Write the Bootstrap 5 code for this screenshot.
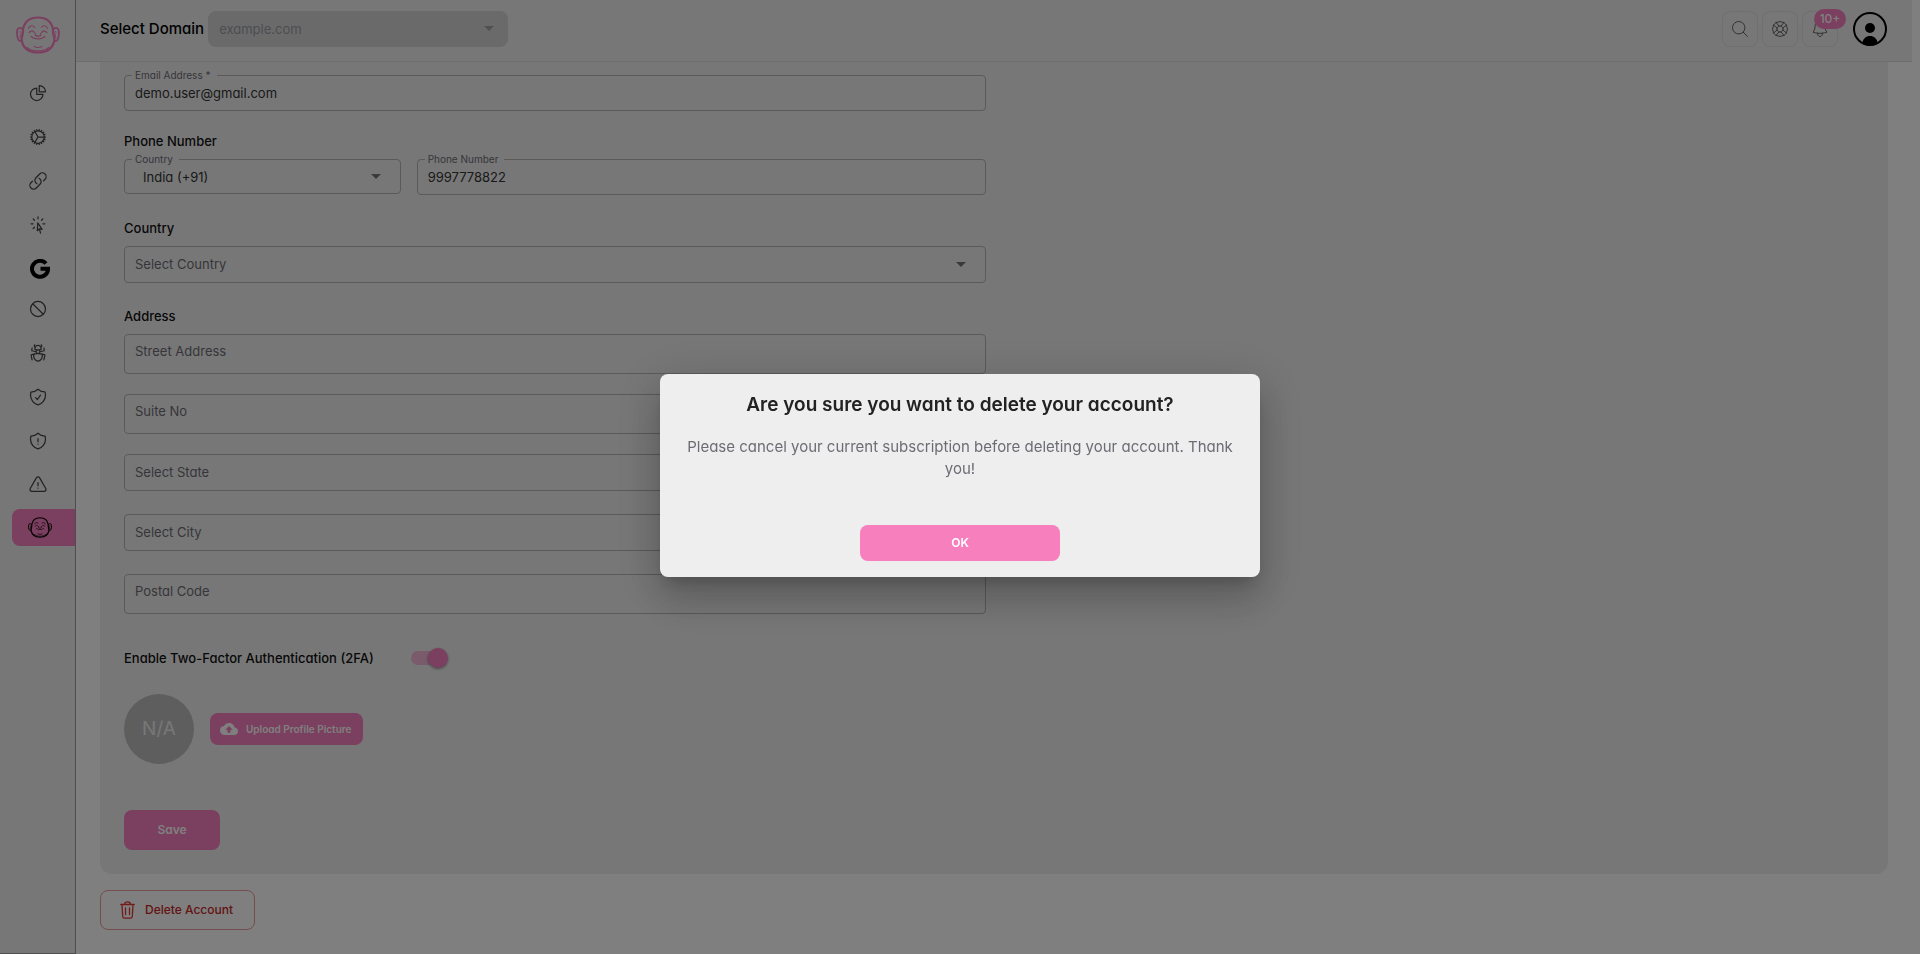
<!DOCTYPE html>
<html lang="en">
<head>
<meta charset="utf-8">
<meta name="viewport" content="width=device-width, initial-scale=1">
<title>Account settings</title>
<link href="https://cdn.jsdelivr.net/npm/bootstrap@5.3.0/dist/css/bootstrap.min.css" rel="stylesheet">
<style>
:root { --pink: #f77fbe; --panel: #efefef; --ink: #222; --line: #b4b4b4; --muted: #6c6c74; }
body { font-family: Inter, "Liberation Sans", sans-serif; font-feature-settings: "cv11"; font-size: 13px; line-height: 20px; color: var(--ink); background: #fff; padding-right: 8px; }
input, select, button { font-feature-settings: inherit; }
svg { display: block; }
.line-icon { fill: none; stroke: currentColor; stroke-width: 1.5; stroke-linecap: round; stroke-linejoin: round; }

.side-bar { width: 76px; background: var(--panel); border-right: 1px solid #9c9c9c; border-bottom: 1px solid #9c9c9c; height: 100vh; position: sticky; top: 0; }
.side-logo { color: var(--pink); margin-bottom: 17px; }
.side-link { height: 44px; color: #444; }
.side-link.short-link { height: 40px; color: #000; padding: 4px 0 0 4px; }
.side-link.current-link { height: 37px; margin: 2px 0 0 12px; padding-right: 8px; background: var(--pink); color: #000; border-radius: 8px 0 0 8px; }

.top-bar { height: 62px; background: var(--panel); border-bottom: 1px solid #dcdcdc; padding: 0 25px 4px 24px; }
.domain-label { font-size: 15px; font-weight: 500; color: #000; }
.domain-select { width: 300px; height: 36px; border: 0; border-radius: 8px; font-size: 13px; padding: 0 11px; color: #9a9ca4; opacity: 1; background-color: #d4d4d4; }
.tool-btn { width: 36px; height: 36px; border: 1px solid #dedede; border-radius: 8px; color: #666; background: transparent; padding: 0; }
.tool-btn .line-icon { stroke-width: 1.2; }
.count-badge { top: -3px; left: 11px; min-width: 32px; height: 20px; line-height: 20px; border-radius: 10px; background: var(--pink); color: #fff; font-size: 12px; font-weight: 500; }
.user-btn { margin-left: 11px; }

.settings-panel { margin: 0 24px; padding: 13px 24px 24px; background: var(--panel); border-radius: 0 0 12px 12px; }
.form-col { padding-right: 8px; }
.sub-title { font-size: 13px; line-height: 20px; font-weight: 500; color: #111; margin: 23px 0 8px; }
.sub-title.first-title { margin-top: 20px; }
.field { position: relative; }
.field-box { display: block; width: 100%; height: 36px; border: 1px solid var(--line); border-radius: 4px; background-color: transparent; padding: 0 10px; font-size: 13px; color: #333; }
.field-box::placeholder { color: var(--muted); opacity: 1; }
select.field-box, .domain-select { appearance: none; background-repeat: no-repeat; background-position: right 19px center; background-image: url("data:image/svg+xml,%3Csvg xmlns='http://www.w3.org/2000/svg' width='10' height='5'%3E%3Cpath d='M0 0h10L5 5z' fill='%23757575'/%3E%3C/svg%3E"); }
.domain-select { background-position: right 14px center; background-image: url("data:image/svg+xml,%3Csvg xmlns='http://www.w3.org/2000/svg' width='10' height='5'%3E%3Cpath d='M0 0h10L5 5z' fill='%23a0a0a0'/%3E%3C/svg%3E"); }
select.field-box { height: 37px; padding-bottom: 2px; }
select.unset { color: var(--muted); }
.field-box.dial-box { height: 35px; padding-left: 18px; padding-bottom: 0; }
.field-box.tall-box { height: 40px; padding-bottom: 6px; }
.notch { position: absolute; left: 8px; top: -7px; padding: 0 6px 0 3px; background: var(--panel); font-size: 10px; line-height: 14px; color: var(--muted); }
.address-grid { display: grid; grid-auto-rows: 40px; gap: 20px; }

.toggle { appearance: none; position: relative; width: 37px; height: 20px; margin: 0; }
.toggle::before { content: ""; position: absolute; left: 0; top: 3px; width: 34px; height: 14px; border-radius: 7px; background: var(--pink); opacity: .5; }
.toggle::after { content: ""; position: absolute; right: 0; top: 0; width: 20px; height: 20px; border-radius: 50%; background: var(--pink); box-shadow: 0 1px 3px rgba(0,0,0,.4); }
.twofa-row { margin-top: 34px; gap: 37px; }
.twofa-row label { font-weight: 500; color: #111; }
.picture-row { margin-top: 26px; gap: 16px; }
.initials { width: 70px; height: 70px; background: #bdbdbd; color: #efefef; font-size: 19px; }
.pink-btn { border: 0; border-radius: 8px; background: var(--pink); color: #fff; font-weight: 600; }
.upload-btn { height: 32px; padding: 0 12px 0 10px; gap: 8px; font-size: 10px; }
.save-btn { width: 96px; height: 40px; margin-top: 46px; font-size: 12px; }
.delete-btn { margin: 16px 24px 24px; height: 40px; border: 1px solid #e99a9a; border-radius: 8px; background: transparent; color: #c62828; font-weight: 500; padding: 0 21px 0 19px; gap: 10px; font-size: 12px; }

.modal-backdrop.show { opacity: .5; }
.modal-dialog.confirm-dialog { max-width: 600px; padding-bottom: 4px; }
.confirm-box { border: 0; border-radius: 8px; background: #eee; padding: 17px 24px 16px; text-align: center; box-shadow: 0 11px 15px -7px rgba(0,0,0,.2), 0 24px 38px 3px rgba(0,0,0,.14), 0 9px 46px 8px rgba(0,0,0,.12); }
.confirm-title { font-size: 19px; line-height: 27px; font-weight: 600; color: var(--ink); margin: 0; }
.confirm-text { font-size: 15px; line-height: 22px; color: #6c6c74; margin: 18px 0 45px; }
.ok-btn { width: 200px; height: 36px; font-size: 12px; margin: 0 auto; }
</style>
</head>
<body>
<svg width="0" height="0" class="position-absolute" aria-hidden="true">
  <symbol id="buddha" viewBox="0 0 44 40" preserveAspectRatio="none">
    <g fill="none" stroke="currentColor" stroke-linecap="round" stroke-linejoin="round">
      <path stroke-width="2.200" d="M7 14C8.500 6 14 1.500 22 1.500S35.500 6 37 14M5.500 25C7 34 13 38.500 22 38.500S37 34 38.500 25M7 14c.5 3-1 8-1.500 11M37 14c-.5 3 1 8 1.500 11"/>
      <path stroke-width="1.800" d="M6.500 14C4.500 11 1 12.500 1 17c0 5 1 9.500 4 9.500M37.500 14c2-3 5.500-1.500 5.500 3 0 5-1 9.500-4 9.500"/>
      <path stroke-width="1" d="M3.500 17c1-2 2 0 1.500 2l-1 4M40.500 17c-1-2-2 0-1.500 2l1 4"/>
      <path stroke-width="1.200" d="M12.500 13c1-3.500 5-3.500 6-1M31.500 13c-1-3.500-5-3.500-6-1M13 17.500c2-2.500 4-2.500 5.500 0M31 17.500c-2-2.500-4-2.500-5.500 0M19.500 18.500c-1 3 1 2 2.500 3 1.500-1 3.500 0 2.500-3M15 21.500c3 3.500 11 3.500 14 0M18 32c2 1.600 6 1.600 8 0M11 33c5 5 17 5 22 0"/>
    </g>
  </symbol>
</svg>
<div class="d-flex">
  <aside class="side-bar flex-shrink-0 pt-3">
    <a href="#" class="side-logo d-flex justify-content-center" aria-label="Home"><svg width="44" height="38"><use href="#buddha"/></svg></a>
    <nav class="d-flex flex-column" aria-label="Main">
      <a href="#" class="side-link d-flex align-items-center justify-content-center" aria-label="Statistics"><svg class="line-icon" width="20" height="20" viewBox="0 0 24 24"><path d="M10.500 6a7.500 7.500 0 1 0 7.500 7.500h-7.500V6Z"/><path d="M13.500 10.500H21A7.500 7.500 0 0 0 13.500 3v7.500Z"/></svg></a>
      <a href="#" class="side-link d-flex align-items-center justify-content-center" aria-label="Settings"><svg class="line-icon" width="20" height="20" viewBox="0 0 24 24"><path d="M4.500 12a7.500 7.500 0 0 0 15 0m-15 0a7.500 7.500 0 1 1 15 0m-15 0H3m16.500 0H21m-1.500 0H12m-8.457 3.077 1.410-.513m14.095-5.130 1.410-.513M5.106 17.785l1.150-.964m11.490-9.642 1.149-.964M7.501 19.795l.75-1.300m7.500-12.990.75-1.300m-6.063 16.658.26-1.477m2.605-14.772.26-1.477m0 17.726-.26-1.477M10.698 4.614l-.26-1.477M16.500 19.794l-.75-1.299M7.500 4.205 12 12m6.894 5.785-1.149-.964M6.256 7.178l-1.150-.964m15.352 8.864-1.410-.513M4.954 9.435l-1.410-.514M12.002 12l-3.750 6.495"/></svg></a>
      <a href="#" class="side-link d-flex align-items-center justify-content-center" aria-label="Links"><svg class="line-icon" width="20" height="20" viewBox="0 0 24 24"><path d="M13.190 8.688a4.500 4.500 0 0 1 1.242 7.244l-4.500 4.500a4.500 4.500 0 0 1-6.364-6.364l1.757-1.757m13.350-.622 1.757-1.757a4.500 4.500 0 0 0-6.364-6.364l-4.500 4.500a4.500 4.500 0 0 0 1.242 7.244"/></svg></a>
      <a href="#" class="side-link d-flex align-items-center justify-content-center" aria-label="Clicks"><svg class="line-icon" width="20" height="20" viewBox="0 0 24 24"><path d="M15.042 21.672 13.684 16.600m0 0-2.510 2.225.569-9.470 5.227 7.917-3.286-.672ZM12 2.250V4.500m5.834.166-1.591 1.591M20.250 10.500H18M7.757 14.743l-1.590 1.590M6 10.500H3.750m4.007-4.243-1.590-1.590"/></svg></a>
      <a href="#" class="side-link short-link d-flex align-items-center justify-content-center" aria-label="Google Ads"><svg width="20" height="20" viewBox="0 0 20 20"><path fill="none" stroke="currentColor" stroke-width="4" d="M16 4.500A8 8 0 1 0 18 10.500V9.800H10.500"/></svg></a>
      <a href="#" class="side-link d-flex align-items-center justify-content-center" aria-label="Blocked"><svg class="line-icon" width="20" height="20" viewBox="0 0 24 24"><path d="M18.364 18.364A9 9 0 0 0 5.636 5.636m12.728 12.728A9 9 0 0 1 5.636 5.636m12.728 12.728L5.636 5.636"/></svg></a>
      <a href="#" class="side-link d-flex align-items-center justify-content-center" aria-label="Bots"><svg class="line-icon" width="20" height="20" viewBox="0 0 24 24"><path d="M12 12.750c1.148 0 2.278.08 3.383.237 1.037.146 1.866.966 1.866 2.013 0 3.728-2.350 6.750-5.250 6.750S6.750 18.728 6.750 15c0-1.046.83-1.867 1.866-2.013A24.204 24.204 0 0 1 12 12.750Zm0 0c2.883 0 5.647.508 8.207 1.440a23.910 23.910 0 0 1-1.152 6.060M12 12.750c-2.883 0-5.647.508-8.208 1.440.125 2.104.52 4.136 1.153 6.060M12 12.750a2.250 2.250 0 0 0 2.248-2.354M12 12.750a2.250 2.250 0 0 1-2.248-2.354M12 8.250c.995 0 1.971-.08 2.922-.236.403-.066.74-.358.795-.762a3.778 3.778 0 0 0-.399-2.250M12 8.250c-.995 0-1.970-.08-2.922-.236-.402-.066-.74-.358-.795-.762a3.734 3.734 0 0 1 .4-2.253M12 8.250a2.250 2.250 0 0 0-2.248 2.146M12 8.250a2.250 2.250 0 0 1 2.248 2.146M8.683 5a6.032 6.032 0 0 1-1.155-1.002c.07-.63.27-1.222.574-1.747m.581 2.749A3.750 3.750 0 0 1 15.318 5m0 0c.427-.283.815-.62 1.155-.999a4.471 4.471 0 0 0-.575-1.752M4.921 6a24.048 24.048 0 0 0-.392 3.314c1.668.546 3.416.914 5.223 1.082M19.080 6c.205 1.080.337 2.187.392 3.314a23.882 23.882 0 0 1-5.223 1.082"/></svg></a>
      <a href="#" class="side-link d-flex align-items-center justify-content-center" aria-label="Protection"><svg class="line-icon" width="20" height="20" viewBox="0 0 24 24"><path d="M9 12.750 11.250 15 15 9.750m-3-7.036A11.959 11.959 0 0 1 3.598 6 11.990 11.990 0 0 0 3 9.749c0 5.592 3.824 10.290 9 11.623 5.176-1.332 9-6.030 9-11.622 0-1.310-.21-2.571-.598-3.751h-.152c-3.196 0-6.100-1.248-8.250-3.285Z"/></svg></a>
      <a href="#" class="side-link d-flex align-items-center justify-content-center" aria-label="Threats"><svg class="line-icon" width="20" height="20" viewBox="0 0 24 24"><path d="M12 9v3.750m0-10.036A11.959 11.959 0 0 1 3.598 6 11.990 11.990 0 0 0 3 9.750c0 5.592 3.824 10.290 9 11.622 5.176-1.332 9-6.030 9-11.622 0-1.310-.21-2.570-.598-3.750h-.152c-3.196 0-6.100-1.249-8.250-3.286Zm0 13.036h.008v.008H12v-.008Z"/></svg></a>
      <a href="#" class="side-link d-flex align-items-center justify-content-center" aria-label="Alerts"><svg class="line-icon" width="20" height="20" viewBox="0 0 24 24"><path d="M12 9v3.750m-9.303 3.376c-.866 1.500.217 3.374 1.948 3.374h14.710c1.730 0 2.813-1.874 1.948-3.374L13.949 3.378c-.866-1.500-3.032-1.500-3.898 0L2.697 16.126ZM12 15.750h.007v.008H12v-.008Z"/></svg></a>
      <a href="#" class="side-link current-link d-flex align-items-center justify-content-center" aria-label="Account" aria-current="page"><svg width="24" height="21"><use href="#buddha"/></svg></a>
    </nav>
  </aside>

  <div class="flex-grow-1">
    <header class="top-bar d-flex align-items-center">
      <label for="domain" class="domain-label me-1">Select Domain</label>
      <select id="domain" class="domain-select" disabled><option>example.com</option></select>
      <div class="d-flex align-items-center gap-1 ms-auto">
        <button type="button" class="tool-btn d-flex align-items-center justify-content-center" aria-label="Search"><svg class="line-icon" width="20" height="20" viewBox="0 0 24 24"><path d="m21 21-5.197-5.197m0 0A7.500 7.500 0 1 0 5.196 5.196a7.500 7.500 0 0 0 10.607 10.607Z"/></svg></button>
        <button type="button" class="tool-btn d-flex align-items-center justify-content-center" aria-label="Help"><svg class="line-icon" width="20" height="20" viewBox="0 0 24 24"><path d="M16.712 4.330a9.027 9.027 0 0 1 1.652 1.306c.51.51.944 1.064 1.306 1.652M16.712 4.330l-3.448 4.138m3.448-4.138a9.014 9.014 0 0 0-9.424 0M19.670 7.288l-4.138 3.448m4.138-3.448a9.014 9.014 0 0 1 0 9.424m-4.138-5.976a3.736 3.736 0 0 0-.88-1.388 3.737 3.737 0 0 0-1.388-.88m2.268 2.268a3.765 3.765 0 0 1 0 2.528m-2.268-4.796a3.765 3.765 0 0 0-2.528 0m4.796 4.796c-.181.506-.475.982-.88 1.388a3.736 3.736 0 0 1-1.388.88m2.268-2.268 4.138 3.448m0 0a9.027 9.027 0 0 1-1.306 1.652c-.51.51-1.064.944-1.652 1.306m0 0-3.448-4.138m3.448 4.138a9.014 9.014 0 0 1-9.424 0m5.976-4.138a3.765 3.765 0 0 1-2.528 0m0 0a3.736 3.736 0 0 1-1.388-.88 3.737 3.737 0 0 1-.88-1.388m2.268 2.268L7.288 19.670m0 0a9.024 9.024 0 0 1-1.652-1.306 9.027 9.027 0 0 1-1.306-1.652m0 0 4.138-3.448M4.330 16.712a9.014 9.014 0 0 1 0-9.424m4.138 5.976a3.765 3.765 0 0 1 0-2.528m0 0c.181-.506.475-.982.88-1.388a3.736 3.736 0 0 1 1.388-.88m-2.268 2.268L4.330 7.288m6.406 1.180L7.288 4.330m0 0a9.024 9.024 0 0 0-1.652 1.306A9.025 9.025 0 0 0 4.330 7.288"/></svg></button>
        <button type="button" class="tool-btn position-relative d-flex align-items-center justify-content-center" aria-label="Notifications"><svg class="line-icon" width="20" height="20" viewBox="0 0 24 24"><path d="M14.857 17.082a23.848 23.848 0 0 0 5.454-1.310A8.967 8.967 0 0 1 18 9.750V9A6 6 0 0 0 6 9v.75a8.967 8.967 0 0 1-2.312 6.022c1.733.64 3.560 1.085 5.455 1.310m5.714 0a24.255 24.255 0 0 1-5.714 0m5.714 0a3 3 0 1 1-5.714 0"/></svg><span class="count-badge position-absolute">10+</span></button>
        <button type="button" class="user-btn btn p-0 border-0 text-black" aria-label="Profile"><svg width="34" height="34" viewBox="0 0 34 34"><circle cx="17" cy="17" r="16" fill="none" stroke="currentColor" stroke-width="2"/><circle cx="17" cy="16" r="5" fill="currentColor"/><path fill="currentColor" d="M9.500 31.500C9.500 21.500 24.500 21.500 24.500 31.500Q17 36 9.500 31.500z"/></svg></button>
      </div>
    </header>

    <main>
      <section class="settings-panel">
        <form>
          <div class="row gx-0"><div class="col-6 form-col">
            <div class="field"><input id="email" type="email" class="field-box" value="demo.user@gmail.com"><label for="email" class="notch">Email Address *</label></div>
            <h2 class="sub-title first-title">Phone Number</h2>
            <div class="row gx-3">
              <div class="col-4"><div class="field"><select id="dial" class="field-box dial-box"><option>India (+91)</option></select><label for="dial" class="notch">Country</label></div></div>
              <div class="col-8"><div class="field"><input id="phone" type="tel" class="field-box" value="9997778822"><label for="phone" class="notch">Phone Number</label></div></div>
            </div>
            <h2 class="sub-title">Country</h2>
            <select class="field-box unset" aria-label="Country"><option>Select Country</option></select>
            <h2 class="sub-title">Address</h2>
            <div class="address-grid">
              <input type="text" class="field-box tall-box" placeholder="Street Address" aria-label="Street Address">
              <input type="text" class="field-box tall-box" placeholder="Suite No" aria-label="Suite No">
              <select class="field-box unset" aria-label="State"><option>Select State</option></select>
              <select class="field-box unset" aria-label="City"><option>Select City</option></select>
              <input type="text" class="field-box tall-box" placeholder="Postal Code" aria-label="Postal Code">
            </div>
          </div></div>
          <div class="twofa-row d-flex align-items-center">
            <label for="twofa">Enable Two-Factor Authentication (2FA)</label>
            <input id="twofa" type="checkbox" role="switch" class="toggle" checked>
          </div>
          <div class="picture-row d-flex align-items-center">
            <span class="initials rounded-circle d-flex align-items-center justify-content-center">N/A</span>
            <button type="button" class="pink-btn upload-btn d-flex align-items-center"><svg width="18" height="18" viewBox="0 0 24 24"><path fill="currentColor" d="M19.350 10.040A7.490 7.490 0 0 0 12 4C9.110 4 6.600 5.640 5.350 8.040A5.994 5.994 0 0 0 0 14c0 3.310 2.690 6 6 6h13c2.760 0 5-2.240 5-5 0-2.640-2.050-4.780-4.650-4.960zM14 13v4h-4v-4H7l5-5 5 5h-3z"/></svg>Upload Profile Picture</button>
          </div>
          <button type="button" class="pink-btn save-btn d-block">Save</button>
        </form>
      </section>
      <button type="button" class="delete-btn d-flex align-items-center"><svg width="15" height="18" viewBox="0 0 15 18" fill="none" stroke="#e53935" stroke-width="1.300" stroke-linecap="round" stroke-linejoin="round"><path d="M.8 3.500h13.400M4.500 3.500c0-3.500 6-3.500 6 0M2 3.500l.7 12c.1 1.200.6 1.700 1.800 1.700h6c1.200 0 1.700-.5 1.800-1.700l.7-12M5.500 7v6.500M9.500 7v6.500"/></svg>Delete Account</button>
    </main>
  </div>
</div>

<div class="modal-backdrop show"></div>
<div class="modal show d-block" tabindex="-1" role="dialog" aria-modal="true" aria-labelledby="confirm-title">
  <div class="modal-dialog modal-dialog-centered confirm-dialog">
    <div class="modal-content confirm-box">
      <h1 id="confirm-title" class="confirm-title">Are you sure you want to delete your account?</h1>
      <p class="confirm-text">Please cancel your current subscription before deleting your account. Thank you!</p>
      <button type="button" class="pink-btn ok-btn">OK</button>
    </div>
  </div>
</div>
<script src="https://cdn.jsdelivr.net/npm/bootstrap@5.3.0/dist/js/bootstrap.bundle.min.js"></script>
</body>
</html>
